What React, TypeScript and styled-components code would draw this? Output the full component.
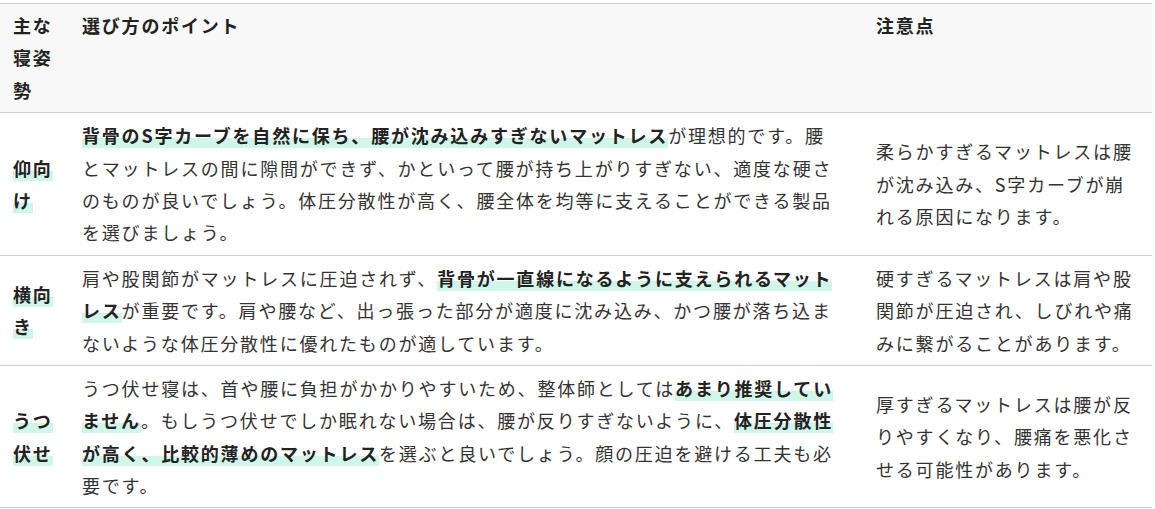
import styled, { createGlobalStyle } from 'styled-components';

const GlobalStyle = createGlobalStyle`
  html, body {
    margin: 0;
    padding: 0;
    background: #ffffff;
  }
  body {
    font-family: "Noto Sans CJK JP", "Noto Sans", sans-serif;
    color: #333333;
  }
`;

const Wrap = styled.div`
  padding-top: 3px;
`;

const Table = styled.table`
  width: 1152px;
  table-layout: fixed;
  border-collapse: collapse;
  font-size: 18px;
  line-height: 1.8;
  letter-spacing: 0.1em;
`;

const HeadCell = styled.th`
  background: #f8f8f8;
  border-top: 1px solid #d0d0d0;
  border-bottom: 1px solid #d0d0d0;
  padding: 5px 13px 6px;
  text-align: left;
  vertical-align: top;
  font-weight: 700;
  color: #222222;
`;

const Cell = styled.td<{ $padRight?: number }>`
  border-bottom: 1px solid #d0d0d0;
  padding: 6px ${p => p.$padRight ?? 13}px 6px 13px;
  vertical-align: middle;
`;

const PostureCell = styled(Cell)`
  font-weight: 700;
  color: #222222;
`;

const Mark = styled.strong`
  font-weight: 700;
  color: #222222;
  background: linear-gradient(transparent 62%, #cff6e8 62%);
`;

type Row = {
  posture: string;
  point: React.ReactNode;
  caution: string;
};

const rows: Row[] = [
  {
    posture: '仰向け',
    point: (
      <>
        <Mark>背骨のS字カーブを自然に保ち、腰が沈み込みすぎないマットレス</Mark>
        が理想的です。腰とマットレスの間に隙間ができず、かといって腰が持ち上がりすぎない、適度な硬さのものが良いでしょう。体圧分散性が高く、腰全体を均等に支えることができる製品を選びましょう。
      </>
    ),
    caution: '柔らかすぎるマットレスは腰が沈み込み、S字カーブが崩れる原因になります。',
  },
  {
    posture: '横向き',
    point: (
      <>
        肩や股関節がマットレスに圧迫されず、
        <Mark>背骨が一直線になるように支えられるマットレス</Mark>
        が重要です。肩や腰など、出っ張った部分が適度に沈み込み、かつ腰が落ち込まないような体圧分散性に優れたものが適しています。
      </>
    ),
    caution: '硬すぎるマットレスは肩や股関節が圧迫され、しびれや痛みに繋がることがあります。',
  },
  {
    posture: 'うつ伏せ',
    point: (
      <>
        うつ伏せ寝は、首や腰に負担がかかりやすいため、整体師としては
        <Mark>あまり推奨していません</Mark>
        。もしうつ伏せでしか眠れない場合は、腰が反りすぎないように、
        <Mark>体圧分散性が高く、比較的薄めのマットレス</Mark>
        を選ぶと良いでしょう。顔の圧迫を避ける工夫も必要です。
      </>
    ),
    caution: '厚すぎるマットレスは腰が反りやすくなり、腰痛を悪化させる可能性があります。',
  },
];

export default function App() {
  return (
    <Wrap>
      <GlobalStyle />
      <Table>
        <colgroup>
          <col style={{ width: 69 }} />
          <col style={{ width: 794 }} />
          <col style={{ width: 289 }} />
        </colgroup>
        <thead>
          <tr>
            <HeadCell>主な寝姿勢</HeadCell>
            <HeadCell>選び方のポイント</HeadCell>
            <HeadCell>注意点</HeadCell>
          </tr>
        </thead>
        <tbody>
          {rows.map(r => (
            <tr key={r.posture}>
              <PostureCell>
                <Mark>{r.posture}</Mark>
              </PostureCell>
              <Cell $padRight={23}>{r.point}</Cell>
              <Cell>{r.caution}</Cell>
            </tr>
          ))}
        </tbody>
      </Table>
    </Wrap>
  );
}
